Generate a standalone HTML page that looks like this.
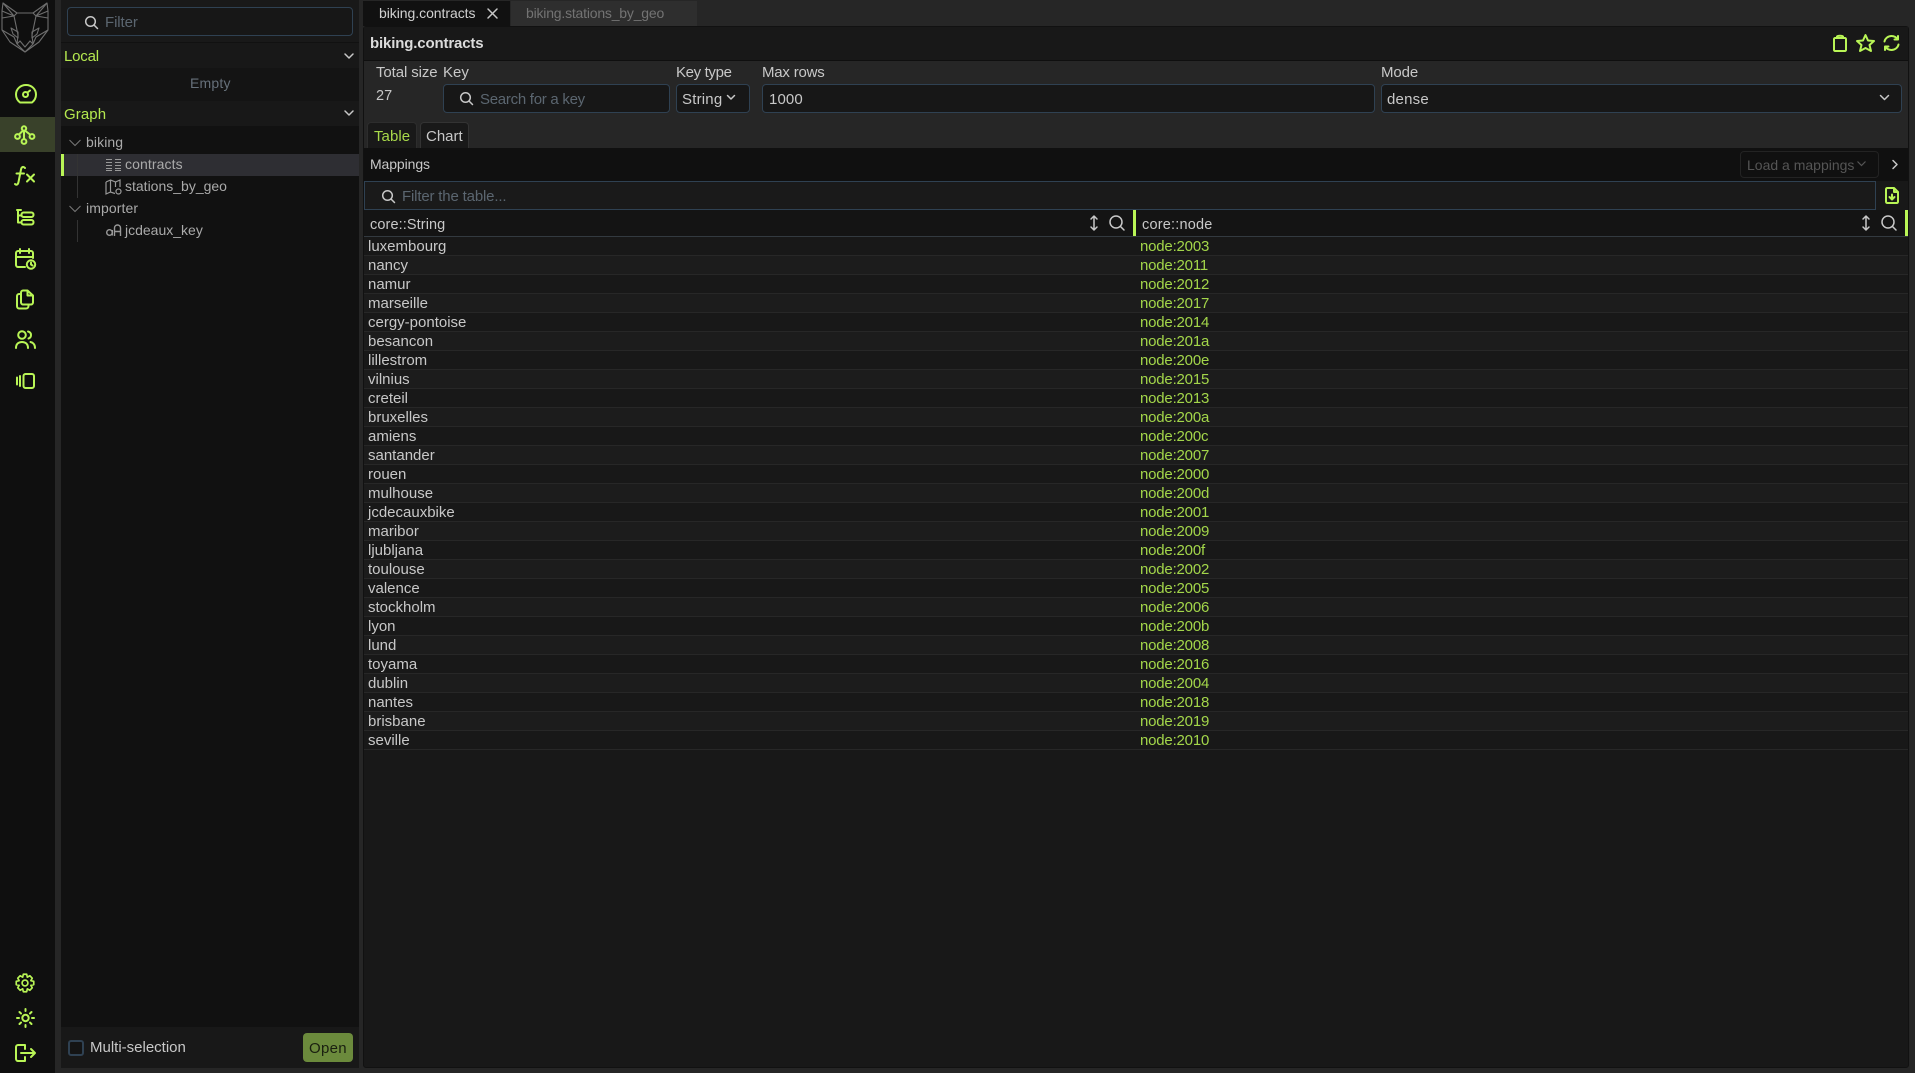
<!DOCTYPE html>
<html><head><meta charset="utf-8"><style>
*{box-sizing:border-box}
html,body{margin:0;padding:0;width:1915px;height:1073px;overflow:hidden;background:#262626;font-family:"Liberation Sans",sans-serif;font-size:15px;color:#c8c8c8}
.a{position:absolute;white-space:nowrap}
.t{position:absolute;white-space:nowrap;line-height:20px;height:20px;margin-top:1px}
.n0{margin-top:0}
.inp{position:absolute;background:#171717;border:1px solid #2f4152;border-radius:4px}
.ph{color:#5b6670}
.g{color:#b4e84f}
svg{position:absolute;fill:none;overflow:visible}
.ic{stroke:#b9f556;stroke-width:2;stroke-linecap:round;stroke-linejoin:round}
.gr{stroke:#c8c8c8;stroke-width:1.5;stroke-linecap:round;stroke-linejoin:round}
.r{position:absolute;left:364px;width:1544px;height:19px;border-bottom:1px solid #272727;line-height:18px;background:#181818}
.r.e{background:#1c1c1c}
.r span{position:absolute;left:4px;top:1px;color:#c8c8c8;font-size:15px}
.r b{position:absolute;left:776px;top:1px;font-weight:normal;color:#a3d64a;font-size:15px;letter-spacing:-.2px}
</style></head><body>

<!-- rail -->
<div class="a" style="left:0;top:0;width:55px;height:1073px;background:#0f0f0f"></div>
<div class="a" style="left:0;top:117px;width:55px;height:35px;background:#39412a"></div>

<!-- logo -->
<svg style="left:0;top:0" width="55" height="55" viewBox="0 0 55 55" stroke="#6e6e6e" stroke-width="1.100" stroke-linejoin="round">
<path d="M3 3L2 11L2 30L10 42L25 52L39 42L48 30L48 11L47 3L33 13H17Z"/>
<path d="M3 3L14 16L2 11M47 3L36 16L48 11M17 13L14 16M33 13L36 16"/>
<path d="M2 18L14 16L18 35L17 44M48 18L36 16L32 35L33 44M2 30L14 37L17 44M48 30L36 37L33 44"/>
<path d="M11 28L18 32L18 38L13 34ZM39 28L32 32L32 38L37 34Z"/>
<path d="M17 44L20 41L25 47L30 41L33 44M17 44L25 52L33 44"/>
</svg>

<!-- rail icons -->
<svg class="ic" style="left:15px;top:84px" width="22" height="20" viewBox="0 0 22 20">
<path d="M5 18.500C2.500 16.500 1 13.800 1 10.500C1 5 5.500 1 11 1C16.500 1 21 5 21 10.500C21 13.800 19.500 16.500 17 18.500Z"/><circle cx="10.500" cy="10.500" r="2.500"/><path d="M12.500 8.500L15 6.500"/></svg>
<svg class="ic" style="left:14px;top:125px" width="22" height="20" viewBox="0 0 22 20">
<circle cx="10" cy="3.500" r="2.200"/><circle cx="3.500" cy="11.500" r="2.400"/><circle cx="18" cy="11.500" r="2.400"/><circle cx="10" cy="16.500" r="2.400"/><path d="M10 6V14M8.500 6L5 9.500M11.500 6L16 9.500"/></svg>
<svg class="ic" style="left:14px;top:165px" width="22" height="22" viewBox="0 0 22 22">
<path d="M11 3C9 1 7.500 2 7 4.500L4.500 17C4 19.500 2.500 20.500 1 19M2.500 8.500H10M13 9.500L20 16.500M20 9.500L13 16.500"/></svg>
<svg class="ic" style="left:15px;top:208px" width="20" height="20" viewBox="0 0 20 20">
<path d="M2 2H6M3 2V14.500H6M3 7.500H6"/><rect x="6.500" y="4.500" width="12" height="4.500" rx="2"/><rect x="6.500" y="12" width="12" height="4.500" rx="2"/></svg>
<svg class="ic" style="left:15px;top:249px" width="22" height="21" viewBox="0 0 22 21">
<path d="M10 18H3C2 18 1 17 1 16V4C1 3 2 2 3 2H16C17 2 18 3 18 4V9M1 8H18M5 0V4M14 0V4"/><circle cx="16" cy="15.500" r="4.200"/><path d="M16 13.500V15.500L17.500 16.500"/></svg>
<svg class="ic" style="left:16px;top:289px" width="18" height="21" viewBox="0 0 18 21">
<path d="M5 3.500C5 2.500 6 1.500 7 1.500H11.500L17 6.500V13.500C17 14.500 16 15.500 15 15.500H7C6 15.500 5 14.500 5 13.500ZM11.500 1.500V6.500H17"/><path d="M5 5H3C2 5 1 6 1 7V17C1 18.500 2 19.500 3 19.500H10C11.500 19.500 12.500 18.500 12.500 17V15.500"/></svg>
<svg class="ic" style="left:15px;top:329px" width="21" height="20" viewBox="0 0 21 20">
<circle cx="7" cy="6" r="3.800"/><path d="M1 19C1 15 3.500 13 7 13C10.500 13 13 15 13 19M13 2.500C15 3 16 4.500 16 6C16 7.500 15 9 13.500 9.500M15.500 13C18 13.500 20 15.500 20 19"/></svg>
<svg class="ic" style="left:16px;top:373px" width="19" height="16" viewBox="0 0 19 16">
<rect x="7.500" y="1" width="10.500" height="14" rx="2"/><path d="M4 3V13M1 4.500V11.500"/></svg>

<svg class="ic" style="left:15px;top:973px" width="20" height="20" viewBox="0 0 24 24">
<circle cx="12" cy="12" r="3.500"/><path d="M10 1.500H14L14.800 5L17.800 3.300L20.700 6.200L19 9.200L22.500 10V14L19 14.800L20.700 17.800L17.800 20.700L14.800 19L14 22.500H10L9.200 19L6.200 20.700L3.300 17.800L5 14.800L1.500 14V10L5 9.200L3.300 6.200L6.200 3.300L9.200 5Z"/></svg>
<svg class="ic" style="left:16px;top:1008px" width="19" height="20" viewBox="0 0 19 20">
<circle cx="9.500" cy="10" r="3.200"/><path d="M9.500 1V3M9.500 17V19M1 10H3M16 10H18M3.500 4L5 5.500M14 14.500L15.500 16M3.500 16L5 14.500M14 5.500L15.500 4"/></svg>
<svg class="ic" style="left:15px;top:1044px" width="21" height="18" viewBox="0 0 21 18">
<path d="M10 1H3C2 1 1 2 1 3V15C1 16 2 17 3 17H10M6 9H20M16 5L20 9L16 13M10 1V5M10 13V17"/></svg>

<!-- left panel -->
<div class="a" style="left:61px;top:0;width:298px;height:1068px;background:#111"></div>
<div class="a" style="left:61px;top:0;width:298px;height:42px;background:#191919"></div>
<div class="inp" style="left:67px;top:7px;width:286px;height:29px"></div>
<svg class="gr" style="left:85px;top:16px" width="13" height="13" viewBox="0 0 13 13"><circle cx="5.500" cy="5.500" r="4.800"/><path d="M9 9L12.500 12.500"/></svg>
<div class="t ph" style="left:105px;top:12px;letter-spacing:-.1px">Filter</div>
<div class="a" style="left:61px;top:43px;width:298px;height:25px;background:#181818"></div>
<div class="t g" style="left:64px;top:46px;letter-spacing:-.2px">Local</div>
<svg class="gr" style="left:344px;top:53px" width="10" height="6" viewBox="0 0 10 6"><path d="M1 1L5 5L9 1"/></svg>
<div class="a" style="left:61px;top:68px;width:298px;height:33px;background:#141414"></div>
<div class="t" style="left:190px;top:72px;color:#66707a;font-size:14px;letter-spacing:.2px">Empty</div>
<div class="a" style="left:61px;top:101px;width:298px;height:25px;background:#181818"></div>
<div class="t g" style="left:64px;top:104px;letter-spacing:.1px">Graph</div>
<svg class="gr" style="left:344px;top:110px" width="10" height="6" viewBox="0 0 10 6"><path d="M1 1L5 5L9 1"/></svg>

<svg style="left:69px;top:139px" stroke="#777" stroke-width="1" width="12" height="8" viewBox="0 0 12 8"><path d="M.5 1L6 6.500L11.500 1"/></svg>
<div class="t n0" style="left:86px;top:132px;font-size:14px;letter-spacing:.1px;color:#aaa">biking</div>
<div class="a" style="left:61px;top:154px;width:298px;height:22px;background:#2e2e33"></div>
<div class="a" style="left:61px;top:154px;width:3px;height:22px;background:#b9f556"></div>
<div class="a" style="left:77px;top:154px;width:1px;height:44px;background:#333"></div>
<svg style="left:106px;top:159px" width="15" height="12" viewBox="0 0 15 12" stroke="#999" stroke-width="1"><path d="M0 .5H6M0 3.500H6M0 6.500H6M0 9.500H6M0 11.500H6M9 .5H15M9 3.500H15M9 6.500H15M9 9.500H15M9 11.500H15"/></svg>
<div class="t n0" style="left:125px;top:154px;font-size:14px;letter-spacing:.1px;color:#aaa">contracts</div>
<svg style="left:105px;top:179px" width="17" height="16" viewBox="0 0 17 16" stroke="#999" stroke-width="1.200"><path d="M1 3L5.500 1L10.500 3L15 1V8M10 14.500L5.500 13L1 15V3M5.500 1V13M10.500 3V8"/><circle cx="13.500" cy="12.500" r="2.500"/></svg>
<div class="t n0" style="left:125px;top:176px;font-size:14px;color:#aaa">stations_by_geo</div>
<svg style="left:69px;top:205px" stroke="#777" stroke-width="1" width="12" height="8" viewBox="0 0 12 8"><path d="M.5 1L6 6.500L11.500 1"/></svg>
<div class="t n0" style="left:86px;top:198px;font-size:14px;letter-spacing:.1px;color:#aaa">importer</div>
<div class="a" style="left:77px;top:220px;width:1px;height:22px;background:#333"></div>
<svg style="left:106px;top:224px" width="16" height="13" viewBox="0 0 16 13" stroke="#999" stroke-width="1.400"><circle cx="3.500" cy="8.500" r="2.800"/><path d="M6.300 6V11.500M8.500 12V4C8.500 2 10 1 11.500 1C13 1 14.500 2 14.500 4V12M8.500 7.500H14.500"/></svg>
<div class="t n0" style="left:125px;top:220px;font-size:14px;color:#aaa">jcdeaux_key</div>

<div class="a" style="left:61px;top:1027px;width:298px;height:41px;background:#181818"></div>
<div class="a" style="left:68px;top:1040px;width:16px;height:16px;border:2px solid #2f4152;border-radius:3px;background:#141414"></div>
<div class="t" style="left:90px;top:1037px">Multi-selection</div>
<div class="a" style="left:303px;top:1033px;width:50px;height:29px;background:#6b8a3c;border-radius:4px;color:#1a1f10;text-align:center;line-height:31px;letter-spacing:.3px">Open</div>

<!-- tabs -->
<div class="a" style="left:363px;top:1px;width:147px;height:25px;background:#111"></div>
<div class="t n0" style="left:379px;top:3px;font-size:14px;letter-spacing:-.05px;color:#d0d0d0">biking.contracts</div>
<svg class="gr" style="left:487px;top:8px" width="11" height="11" viewBox="0 0 11 11" stroke-width="1.300"><path d="M1 1L10 10M10 1L1 10"/></svg>
<div class="a" style="left:511px;top:1px;width:186px;height:25px;background:#2e2e2e"></div>
<div class="t n0" style="left:526px;top:3px;font-size:14px;letter-spacing:-.2px;color:#737373">biking.stations_by_geo</div>

<!-- main -->
<div class="a" style="left:363px;top:26px;width:1546px;height:1042px;background:#181818;border:1px solid #111;border-radius:3px"></div>
<div class="a" style="left:364px;top:27px;width:1544px;height:33px;background:#181818"></div>
<div class="t" style="left:370px;top:33px;font-weight:bold;color:#dcdcdc;font-size:15px;letter-spacing:-.15px">biking.contracts</div>
<svg class="ic" style="left:1833px;top:35px" width="15" height="17" viewBox="0 0 15 17" stroke-width="1.500"><path d="M4 3H2C1.500 3 1 3.500 1 4V15C1 15.500 1.500 16 2 16H12C12.500 16 13 15.500 13 15V4C13 3.500 12.500 3 12 3H10M4 3V1.500C5 .5 9 .5 10 1.500V3Z"/></svg>
<svg class="ic" style="left:1856px;top:34px" width="19" height="18" viewBox="0 0 19 18" stroke-width="1.600"><path d="M9.500 1L12 6.500L18 7L13.500 11L15 17L9.500 14L4 17L5.500 11L1 7L7 6.500Z"/></svg>
<svg class="ic" style="left:1883px;top:35px" width="17" height="16" viewBox="0 0 17 16" stroke-width="1.600"><path d="M1.500 6.500C2 3.500 5 1 8.500 1C11 1 13.500 2.500 15 4.500M15 1V4.500H11.500M15.500 9.500C15 12.500 12 15 8.500 15C6 15 3.500 13.500 2 11.500M2 15V11.500H5.500"/></svg>

<div class="a" style="left:364px;top:60px;width:1544px;height:1px;background:#0f0f0f"></div>
<div class="a" style="left:364px;top:61px;width:1544px;height:87px;background:#262626"></div>
<div class="t" style="left:376px;top:62px;letter-spacing:-.1px">Total size</div>
<div class="t" style="left:443px;top:62px">Key</div>
<div class="t" style="left:676px;top:62px;letter-spacing:-.35px">Key type</div>
<div class="t" style="left:762px;top:62px;letter-spacing:-.2px">Max rows</div>
<div class="t" style="left:1381px;top:62px;letter-spacing:-.1px">Mode</div>
<div class="t" style="left:376px;top:85px;font-size:14.500px">27</div>
<div class="inp" style="left:443px;top:84px;width:227px;height:29px"></div>
<svg class="gr" style="left:460px;top:92px" width="13" height="13" viewBox="0 0 13 13"><circle cx="5.500" cy="5.500" r="4.800"/><path d="M9 9L12.500 12.500"/></svg>
<div class="t ph" style="left:480px;top:89px;letter-spacing:-.27px">Search for a key</div>
<div class="inp" style="left:676px;top:84px;width:74px;height:29px"></div>
<div class="t" style="left:682px;top:89px;letter-spacing:.2px">String</div>
<svg class="gr" style="left:727px;top:95px" width="8" height="5" viewBox="0 0 8 5" stroke-width="1.200"><path d="M.5 .5L4 4L7.500 .5"/></svg>
<div class="inp" style="left:762px;top:84px;width:613px;height:29px"></div>
<div class="t" style="left:769px;top:89px;letter-spacing:.1px">1000</div>
<div class="inp" style="left:1381px;top:84px;width:521px;height:29px"></div>
<div class="t" style="left:1387px;top:89px;letter-spacing:.2px">dense</div>
<svg class="gr" style="left:1880px;top:95px" width="9" height="6" viewBox="0 0 9 6" stroke-width="1.200" stroke="#999"><path d="M.5 .5L4.500 4.500L8.500 .5"/></svg>

<div class="a" style="left:367px;top:122px;width:50px;height:26px;background:#191919;border:1px solid #2d2d2d;border-bottom:0;border-radius:4px 4px 0 0"></div>
<div class="t g" style="left:374px;top:126px;color:#a8d94a;letter-spacing:.05px">Table</div>
<div class="a" style="left:420px;top:122px;width:49px;height:26px;background:#191919;border:1px solid #333;border-bottom:0;border-radius:4px 4px 0 0"></div>
<div class="t" style="left:426px;top:126px">Chart</div>

<div class="a" style="left:364px;top:148px;width:1544px;height:33px;background:#101010"></div>
<div class="t n0" style="left:370px;top:154px;font-size:14px;letter-spacing:-.1px">Mappings</div>
<div class="a" style="left:1740px;top:151px;width:139px;height:27px;border:1px solid #232323;border-radius:4px"></div>
<div class="t" style="left:1747px;top:154px;color:#555;font-size:14px">Load a mappings</div>
<svg style="left:1857px;top:161px" width="9" height="6" viewBox="0 0 9 6" stroke="#555" stroke-width="1.200"><path d="M.5 .5L4.500 4.500L8.500 .5"/></svg>
<svg class="gr" style="left:1892px;top:160px" width="6" height="9" viewBox="0 0 6 9" stroke="#999" stroke-width="1.200"><path d="M1 .5L5 4.500L1 8.500"/></svg>

<div class="a" style="left:364px;top:181px;width:1512px;height:29px;background:#1a1a1a;border:1px solid #2f4152"></div>
<svg class="gr" style="left:382px;top:190px" width="13" height="13" viewBox="0 0 13 13"><circle cx="5.500" cy="5.500" r="4.800"/><path d="M9 9L12.500 12.500"/></svg>
<div class="t ph" style="left:402px;top:186px;letter-spacing:-.17px">Filter the table...</div>
<svg class="ic" style="left:1885px;top:187px" width="14" height="17" viewBox="0 0 14 17" stroke-width="1.500"><path d="M1 2.500C1 1.500 1.500 1 2.500 1H9L13 5V14.500C13 15.500 12.500 16 11.500 16H2.500C1.500 16 1 15.500 1 14.500ZM9 1V5H13M7 7.500V12M4.500 10L7 12.500L9.500 10"/></svg>

<div class="a" style="left:364px;top:210px;width:1544px;height:27px;background:#141414;border-bottom:1px solid #333a40"></div>
<div class="t" style="left:370px;top:214px;font-size:14.500px;letter-spacing:.1px">core::String</div>
<svg class="gr" style="left:1090px;top:215px" width="8" height="16" viewBox="0 0 8 16" stroke-width="1.300"><path d="M4 1V15M1 4L4 1L7 4M1 12L4 15L7 12"/></svg>
<svg class="gr" style="left:1109px;top:215px" width="16" height="16" viewBox="0 0 16 16" stroke-width="1.400"><circle cx="7" cy="7" r="6"/><path d="M11.500 11.500L15 15"/></svg>
<div class="a" style="left:1133px;top:210px;width:3px;height:26px;background:#b9f556"></div>
<div class="t" style="left:1142px;top:214px;font-size:14.500px;letter-spacing:.2px">core::node</div>
<svg class="gr" style="left:1862px;top:215px" width="8" height="16" viewBox="0 0 8 16" stroke-width="1.300"><path d="M4 1V15M1 4L4 1L7 4M1 12L4 15L7 12"/></svg>
<svg class="gr" style="left:1881px;top:215px" width="16" height="16" viewBox="0 0 16 16" stroke-width="1.400"><circle cx="7" cy="7" r="6"/><path d="M11.500 11.500L15 15"/></svg>
<div class="a" style="left:1905px;top:210px;width:3px;height:26px;background:#b9f556"></div>

<div class="r" style="top:237px"><span>luxembourg</span><b>node:2003</b></div>
<div class="r e" style="top:256px"><span>nancy</span><b>node:2011</b></div>
<div class="r" style="top:275px"><span>namur</span><b>node:2012</b></div>
<div class="r e" style="top:294px"><span>marseille</span><b>node:2017</b></div>
<div class="r" style="top:313px"><span>cergy-pontoise</span><b>node:2014</b></div>
<div class="r e" style="top:332px"><span>besancon</span><b>node:201a</b></div>
<div class="r" style="top:351px"><span>lillestrom</span><b>node:200e</b></div>
<div class="r e" style="top:370px"><span>vilnius</span><b>node:2015</b></div>
<div class="r" style="top:389px"><span>creteil</span><b>node:2013</b></div>
<div class="r e" style="top:408px"><span>bruxelles</span><b>node:200a</b></div>
<div class="r" style="top:427px"><span>amiens</span><b>node:200c</b></div>
<div class="r e" style="top:446px"><span>santander</span><b>node:2007</b></div>
<div class="r" style="top:465px"><span>rouen</span><b>node:2000</b></div>
<div class="r e" style="top:484px"><span>mulhouse</span><b>node:200d</b></div>
<div class="r" style="top:503px"><span>jcdecauxbike</span><b>node:2001</b></div>
<div class="r e" style="top:522px"><span>maribor</span><b>node:2009</b></div>
<div class="r" style="top:541px"><span>ljubljana</span><b>node:200f</b></div>
<div class="r e" style="top:560px"><span>toulouse</span><b>node:2002</b></div>
<div class="r" style="top:579px"><span>valence</span><b>node:2005</b></div>
<div class="r e" style="top:598px"><span>stockholm</span><b>node:2006</b></div>
<div class="r" style="top:617px"><span>lyon</span><b>node:200b</b></div>
<div class="r e" style="top:636px"><span>lund</span><b>node:2008</b></div>
<div class="r" style="top:655px"><span>toyama</span><b>node:2016</b></div>
<div class="r e" style="top:674px"><span>dublin</span><b>node:2004</b></div>
<div class="r" style="top:693px"><span>nantes</span><b>node:2018</b></div>
<div class="r e" style="top:712px"><span>brisbane</span><b>node:2019</b></div>
<div class="r" style="top:731px"><span>seville</span><b>node:2010</b></div>
</body></html>
